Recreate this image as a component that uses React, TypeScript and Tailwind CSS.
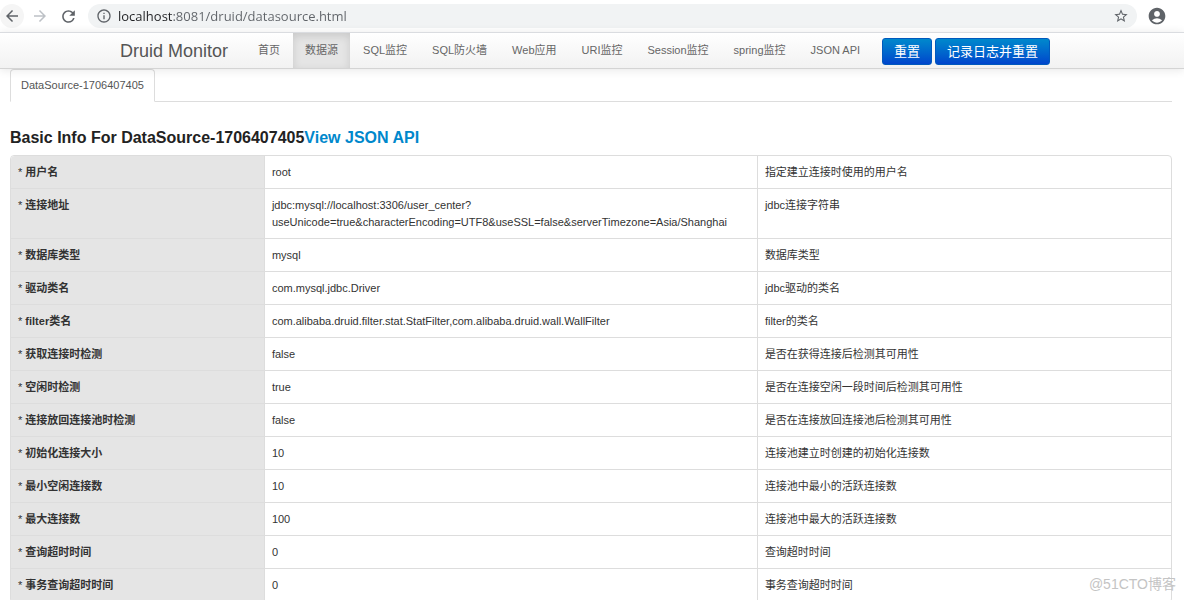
import { MdAccountCircle, MdArrowBack, MdArrowForward, MdInfoOutline, MdRefresh, MdStarBorder } from "react-icons/md";
import clsx from "clsx";

const navItems = [
    "首页",
    "数据源",
    "SQL监控",
    "SQL防火墙",
    "Web应用",
    "URI监控",
    "Session监控",
    "spring监控",
    "JSON API",
];

const rows = [
    { label: "用户名", value: "root", desc: "指定建立连接时使用的用户名" },
    {
        label: "连接地址",
        value: "jdbc:mysql://localhost:3306/user_center?useUnicode=true&characterEncoding=UTF8&useSSL=false&serverTimezone=Asia/Shanghai",
        desc: "jdbc连接字符串",
    },
    { label: "数据库类型", value: "mysql", desc: "数据库类型" },
    { label: "驱动类名", value: "com.mysql.jdbc.Driver", desc: "jdbc驱动的类名" },
    {
        label: "filter类名",
        value: "com.alibaba.druid.filter.stat.StatFilter,com.alibaba.druid.wall.WallFilter",
        desc: "filter的类名",
    },
    { label: "获取连接时检测", value: "false", desc: "是否在获得连接后检测其可用性" },
    { label: "空闲时检测", value: "true", desc: "是否在连接空闲一段时间后检测其可用性" },
    { label: "连接放回连接池时检测", value: "false", desc: "是否在连接放回连接池后检测其可用性" },
    { label: "初始化连接大小", value: "10", desc: "连接池建立时创建的初始化连接数" },
    { label: "最小空闲连接数", value: "10", desc: "连接池中最小的活跃连接数" },
    { label: "最大连接数", value: "100", desc: "连接池中最大的活跃连接数" },
    { label: "查询超时时间", value: "0", desc: "查询超时时间" },
    { label: "事务查询超时时间", value: "0", desc: "事务查询超时时间" },
];

/** ---------- Browser toolbar ---------- */
const BrowserBar = () => (
    <div className="flex h-8 shrink-0 items-center bg-white text-[#5f6368]">
        <button aria-label="Back" className="flex size-6 items-center justify-center rounded-full bg-[#f5f5f5]">
            <MdArrowBack size={18} />
        </button>
        <button aria-label="Forward" className="ml-1 flex size-6 items-center justify-center text-[#bdc1c6]">
            <MdArrowForward size={18} />
        </button>
        <button aria-label="Reload" className="ml-1 flex size-6 items-center justify-center">
            <MdRefresh size={19} />
        </button>
        <div className="ml-2 flex h-6 flex-1 items-center rounded-full bg-[#f1f3f4] px-2">
            <MdInfoOutline size={16} />
            <input
                type="text"
                aria-label="Address"
                defaultValue="localhost:8081/druid/datasource.html"
                className="ml-1.5 flex-1 bg-[linear-gradient(to_right,#202124_54px,#5f6368_54px)] bg-clip-text font-['Open_Sans',sans-serif] text-[13px] leading-5 text-transparent outline-none"
            />
            <button aria-label="Bookmark this page">
                <MdStarBorder size={16} />
            </button>
        </div>
        <button aria-label="Profile" className="mr-[17px] ml-2.5">
            <MdAccountCircle size={20} />
        </button>
    </div>
);

/** ---------- Top navigation ---------- */
const Navbar = () => (
    <header className="z-10 shrink-0 border-t border-b border-t-[#dadce0] border-b-[#d4d4d4] bg-linear-to-b from-white to-[#f2f2f2] shadow-[0_1px_9px_rgba(0,0,0,0.1)]">
        <div className="mx-auto flex h-[35px] w-full max-w-[944px] items-stretch">
            <a href="#" className="flex items-center text-lg text-[#555]">
                Druid Monitor
            </a>
            <nav className="ml-[18px] flex gap-px">
                {navItems.map((item) => (
                    <a
                        key={item}
                        href="#"
                        className={clsx(
                            "flex items-center px-3 whitespace-nowrap text-[#666]",
                            item === "数据源" && "bg-[#e5e5e5] shadow-[inset_0_3px_8px_rgba(0,0,0,0.125)]"
                        )}
                    >
                        {item}
                    </a>
                ))}
            </nav>
            <div className="ml-2.5 flex items-center gap-[3px] pt-0.5">
                {["重置", "记录日志并重置"].map((text) => (
                    <button
                        key={text}
                        className="h-[27px] rounded-[3px] border border-[#0059bd] bg-linear-to-b from-[#0088cc] to-[#0044cc] px-[11px] text-[13px] leading-5 whitespace-nowrap text-white"
                    >
                        {text}
                    </button>
                ))}
            </div>
        </div>
    </header>
);

export default function App() {
    return (
        <div className="relative flex h-screen flex-col overflow-hidden bg-white font-['Liberation_Sans','Noto_Sans_CJK_SC',sans-serif] text-[11px] leading-[17px] text-[#333]">
            <BrowserBar />
            <Navbar />
            <main className="min-h-0 flex-1 overflow-hidden pr-3 pl-2.5">
                <div className="flex border-b border-[#ddd]">
                    <a
                        href="#"
                        className="-mb-px flex h-[33px] items-center rounded-t border border-[#ddd] border-b-white bg-white px-2.5 text-[#555]"
                    >
                        DataSource-1706407405
                    </a>
                </div>
                <h3 className="mt-[26px] mb-[7px] text-base leading-5 font-bold text-[#222]">
                    Basic Info For DataSource-1706407405
                    <a href="#" className="text-[#0088cc]">
                        View JSON API
                    </a>
                </h3>
                <table className="w-full table-fixed border-separate border-spacing-0 rounded border border-[#ddd]">
                    <colgroup>
                        <col className="w-[21.8%]" />
                        <col className="w-[42.5%]" />
                        <col />
                    </colgroup>
                    <tbody>
                        {rows.map((row) => (
                            <tr key={row.label} className="group align-top">
                                <th
                                    scope="row"
                                    className="border-b border-[#ddd] bg-[#e5e5e5] px-[7px] pt-2 pb-[7px] text-left font-bold group-first:rounded-tl"
                                >
                                    <span className="font-normal">* </span>
                                    {row.label}
                                </th>
                                <td className="border-b border-l border-[#ddd] px-[7px] pt-2 pb-[7px]">{row.value}</td>
                                <td className="border-b border-l border-[#ddd] px-[7px] pt-2 pb-[7px]">{row.desc}</td>
                            </tr>
                        ))}
                    </tbody>
                </table>
            </main>
            <span className="absolute right-2 bottom-1.5 z-20 text-sm leading-5 text-[#c4c4c4]">@51CTO博客</span>
        </div>
    );
}
